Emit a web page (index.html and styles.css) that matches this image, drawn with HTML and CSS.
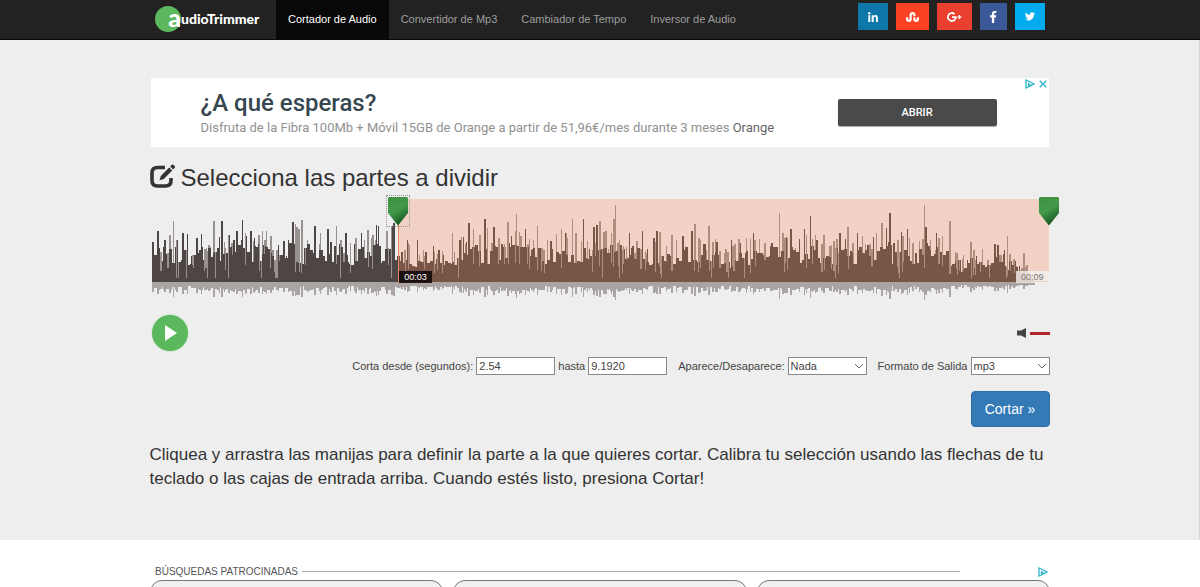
FILE: index.html
```html
<!DOCTYPE html>
<html lang="es">
<head>
<meta charset="utf-8">
<meta name="viewport" content="width=device-width, initial-scale=1">
<title>AudioTrimmer</title>
<link rel="stylesheet" href="styles.css">
</head>
<body>
<header class="topbar">
  <div class="container topbar-inner">
    <a class="logo" href="#"><span class="logo-a">a</span><span class="logo-rest">udioTrimmer</span></a>
    <nav class="nav">
      <a class="nav-link active" href="#">Cortador de Audio</a>
      <a class="nav-link" href="#">Convertidor de Mp3</a>
      <a class="nav-link" href="#">Cambiador de Tempo</a>
      <a class="nav-link" href="#">Inversor de Audio</a>
    </nav>
    <div class="social">
      <a class="share linkedin" href="#" aria-label="LinkedIn"><svg width="10" height="10" viewBox="0 0 10 10"><circle cx="1.3" cy="1.2" r="1.2"/><path d="M.3 3.2h2V10h-2zM3.7 3.2h1.9v.9c.4-.7 1.1-1.1 2-1.1 1.7 0 2.3 1 2.3 2.9V10h-2V6.400c0-1-.2-1.700-1-1.700s-1.200.6-1.200 1.700V10h-2z"/></svg></a>
      <a class="share stumble" href="#" aria-label="StumbleUpon"><svg width="13" height="10" viewBox="0 0 13 10"><path d="M7.300 4V3A.8.8 0 0 0 5.700 3v4A2.850 2.850 0 0 1 0 7V5.200h2.200V7a.7.7 0 0 0 1.400 0V2.900a2.900 2.900 0 0 1 5.800 0V4l-1.200.5zM7.300 5.200l.9.400 1.200-.4V7a.7.7 0 0 0 1.400 0V5.200H13V7a2.850 2.850 0 0 1-5.700 0z"/></svg></a>
      <a class="share google" href="#" aria-label="Google+"><svg width="15" height="10" viewBox="0 0 15 10"><path d="M5 4.200h4.700C10 7.400 8 9.900 5 9.900A4.900 4.900 0 1 1 8.300 1.400L6.900 2.800A3 3 0 1 0 5 7.900c1.500 0 2.400-.9 2.600-2H5zM11.700 3.100h1.400v1.300h1.400v1.400h-1.400v1.300h-1.400V5.800h-1.300V4.400h1.300z"/></svg></a>
      <a class="share facebook" href="#" aria-label="Facebook"><svg width="7" height="12" viewBox="0 0 7 12"><path d="M6.300.1v1.900H5.200c-.8 0-1 .4-1 1v1.300h2.100L6 6.400H4.200V12H1.900V6.400H.1V4.300h1.800V2.700C1.900.9 3 0 4.600 0z"/></svg></a>
      <a class="share twitter" href="#" aria-label="Twitter"><svg width="10" height="9" viewBox="0 0 24 20"><path d="M24 2.400a10 10 0 0 1-2.800.8A5 5 0 0 0 23.300.4a10 10 0 0 1-3.100 1.200 4.900 4.900 0 0 0-8.400 4.500A14 14 0 0 1 1.700.9 4.900 4.900 0 0 0 3.200 7.500 5 5 0 0 1 1 6.900a4.900 4.900 0 0 0 3.900 4.900 5 5 0 0 1-2.200.1 4.900 4.900 0 0 0 4.600 3.400A10 10 0 0 1 0 17.400a14 14 0 0 0 21.500-12.400A10 10 0 0 0 24 2.400z"/></svg></a>
    </div>
  </div>
</header>

<main class="main">
  <div class="container">
    <section class="banner">
      <div class="banner-text">
        <h2 class="banner-title">¿A qué esperas?</h2>
        <p class="banner-copy">Disfruta de la Fibra 100Mb + Móvil 15GB de Orange a partir de 51,96€/mes durante 3 meses <span class="brand">Orange</span></p>
      </div>
      <button class="banner-button" type="button">ABRIR</button>
      <div class="ad-marks">
        <svg class="ad-icon" width="10" height="10" viewBox="0 0 10 10"><path d="M1 1v8l8-4zM3.500 4v3l2-1.800"/></svg>
        <svg class="ad-icon" width="8" height="8" viewBox="0 0 8 8"><path d="M.7.7l6.600 6.600M7.300.7L.7 7.300"/></svg>
      </div>
    </section>

    <h1 class="heading">
      <svg class="edit-icon" width="26" height="24" viewBox="0 0 26 24"><path class="edit-frame" d="M15 3.500H7.500Q2 3.500 2 9v7.500Q2 22 7.500 22h8Q21 22 21 16.500V14"/><path d="M9.500 16.300l1.300-4.400 8.400-8.400 3 3-8.400 8.400zM20.200 2.500l1.600-1.700q.8-.8 1.600 0l1.300 1.300q.8.800 0 1.600l-1.600 1.700z"/></svg>
      Selecciona las partes a dividir
    </h1>

    <section class="wave">
      <svg class="wave-svg" viewBox="0 0 898 104" preserveAspectRatio="none" shape-rendering="crispEdges" aria-hidden="true">
        <path id="wave-reflection" class="wave-reflection"/>
        <path id="wave-light" class="wave-light"/>
        <path id="wave-dark" class="wave-dark"/>
      </svg>
      <div class="selection">
        <span class="time time-start">00:03</span>
        <span class="time time-end">00:09</span>
        <button class="handle handle-start" type="button" aria-label="Inicio"><svg width="22" height="30" viewBox="0 0 22 30"><defs><linearGradient id="green" x1=".3" y1="0" x2=".7" y2="1"><stop offset="0" stop-color="#3f9443"/><stop offset=".45" stop-color="#43994a"/><stop offset="1" stop-color="#0e4d1b"/></linearGradient></defs><path fill="url(#green)" d="M2 1h18l1 1v15L11 29.500 1 17V2z"/></svg></button>
        <button class="handle handle-end" type="button" aria-label="Fin"><svg width="22" height="30" viewBox="0 0 22 30"><path fill="url(#green)" d="M2 1h18l1 1v15L11 29.500 1 17V2z"/></svg></button>
      </div>
    </section>

    <section class="player">
      <button class="play" type="button" aria-label="Reproducir"><svg width="12" height="16" viewBox="0 0 12 16"><path d="M0 0l12 8-12 8z"/></svg></button>
      <div class="volume">
        <svg width="9" height="10" viewBox="0 0 9 10"><path d="M0 2.500h4L9 0v10L4 7.500H0z"/></svg>
        <span class="volume-level"></span>
      </div>
    </section>

    <form class="form">
      <div class="fields">
        <label for="from">Corta desde (segundos):</label>
        <input class="field" id="from" type="text" value="2.54">
        <label for="to">hasta</label>
        <input class="field" id="to" type="text" value="9.1920">
        <label class="spaced" for="fade">Aparece/Desaparece:</label>
        <select class="field select" id="fade"><option>Nada</option></select>
        <label class="spaced" for="format">Formato de Salida</label>
        <select class="field select" id="format"><option>mp3</option></select>
      </div>
      <button class="cut" type="button">Cortar »</button>
    </form>

    <p class="help">Cliquea y arrastra las manijas para definir la parte a la que quieres cortar. Calibra tu selección usando las flechas de tu teclado o las cajas de entrada arriba. Cuando estés listo, presiona Cortar!</p>
  </div>
</main>

<section class="container sponsored">
  <div class="sponsored-head">
    <span>BÚSQUEDAS PATROCINADAS</span>
    <span class="rule"></span>
    <svg class="ad-icon" width="10" height="10" viewBox="0 0 10 10"><path d="M1 1v8l8-4zM3.500 4v3l2-1.800"/></svg>
  </div>
  <div class="cards">
    <div class="card"></div>
    <div class="card"></div>
    <div class="card"></div>
  </div>
</section>
<script src="wave.js"></script>
</body>
</html>
```
FILE: styles.css
```css
* { box-sizing: border-box; }
html { scrollbar-width: none; }
body {
  margin: 0;
  background: #fff;
  color: #333;
  font-family: "Liberation Sans", Arial, sans-serif;
  font-size: 11px;
}
h1, h2, p { margin: 0; font-weight: 400; }
a { text-decoration: none; }
button { font-family: inherit; padding: 0; border: 0; cursor: pointer; }
svg { display: block; flex: none; }

.container { max-width: 900px; margin: 0 auto; }

.topbar { background: #222; border-bottom: 1px solid #080808; }
.topbar-inner { display: flex; height: 39px; padding: 0 5px; }
.logo {
  display: flex;
  align-items: center;
  width: 121px;
  padding-bottom: 2px;
  color: #fff;
  font-family: Lato, sans-serif;
  font-weight: 900;
  font-size: 14px;
}
.logo-a {
  display: flex;
  align-items: center;
  justify-content: flex-end;
  width: 26px;
  height: 26px;
  padding-bottom: 3px;
  border-radius: 50%;
  background: #5cb85c;
  font-size: 25px;
  line-height: 24px;
}
.nav { display: flex; flex: 1; }
.nav-link {
  display: flex;
  align-items: center;
  padding: 0 12px 2px;
  color: #9d9d9d;
  white-space: nowrap;
}
.nav-link.active { background: #080808; color: #fff; }
.social { display: flex; gap: 8px; padding-top: 3px; }
.share {
  display: flex;
  align-items: center;
  height: 27px;
  padding: 0 10px;
  fill: #fff;
}
.linkedin { background: #0e76a8; }
.stumble { background: #fb4323; }
.google { background: #e93f2e; }
.facebook { background: #3b5998; }
.twitter { background: #00acee; }

.main {
  padding: 38px 0 49px;
  background: #eee;
  border-right: 1px solid #d8d8d8;
}

.banner {
  position: relative;
  display: flex;
  align-items: center;
  justify-content: space-between;
  margin: 0 1px;
  padding: 10px 52px 10px 50px;
  background: #fff;
  font-family: Roboto, sans-serif;
}
.banner-title {
  color: #37474f;
  font-size: 24px;
  font-weight: 500;
  line-height: 30px;
}
.banner-copy { color: #919191; font-size: 13px; line-height: 19px; }
.brand { color: #666; }
.banner-button {
  width: 159px;
  height: 27px;
  border-radius: 2px;
  background: #4a4a4a;
  box-shadow: 0 1px 1px #aaa;
  color: #fff;
  font-size: 11px;
  font-weight: 500;
}
.ad-marks {
  position: absolute;
  top: 1px;
  right: 2px;
  display: flex;
  align-items: center;
  gap: 4px;
}
.ad-icon { fill: none; stroke: #2fb4cc; stroke-width: 1.3; }

.heading {
  display: flex;
  align-items: center;
  gap: 5px;
  padding: 16px 0 6px;
  font-size: 24px;
  line-height: 30px;
}
.edit-icon { fill: #333; margin-top: -5px; }
.edit-frame { fill: none; stroke: #333; stroke-width: 3.6; }

.wave { position: relative; height: 104px; margin: 0 1px; }
.wave-svg { width: 100%; height: 100%; }
.wave-dark { fill: #4d4645; }
.wave-light { fill: #989190; }
.wave-reflection { fill: #aaa4a4; }
.selection {
  position: absolute;
  top: 0;
  right: 0;
  bottom: 21px;
  left: 27.6%;
  border-left: 1px solid #e8875e;
  background: rgba(253, 128, 77, .255);
}
.time {
  position: absolute;
  bottom: -1px;
  padding: 0 5px;
  font-size: 9px;
  line-height: 12px;
}
.time-start { left: 0; background: rgba(10, 5, 5, .85); color: #fff; }
.time-end { right: 0; background: rgba(245, 240, 235, .8); color: #777; }
.handle { position: absolute; top: -3px; width: 22px; height: 30px; background: none; }
.handle-start { left: -12px; outline: 1px dotted #999; }
.handle-end { right: -11px; }

.player {
  display: flex;
  align-items: center;
  justify-content: space-between;
  padding: 12px 0 0 2px;
}
.play {
  display: grid;
  place-items: center;
  width: 36px;
  height: 36px;
  padding-left: 2px;
  border-radius: 50%;
  background: #5cb85c;
  box-shadow: 0 0 2px #a8d8a8;
  fill: #fff;
}
.volume { display: flex; align-items: center; gap: 4px; fill: #444; }
.volume-level { width: 20px; height: 3px; background: #b3242b; }

.form { display: flex; flex-direction: column; align-items: flex-end; gap: 16px; padding-top: 6px; }
.fields { display: flex; align-items: center; gap: 3px; color: #444; }
.spaced { margin-left: 8px; }
.field {
  width: 79px;
  height: 18px;
  padding: 0 2px;
  border: 1px solid #888;
  border-radius: 0;
  background: #fff;
  color: #444;
  font-family: inherit;
  font-size: 11px;
}
.select {
  appearance: none;
  background: #fff url("data:image/svg+xml,%3Csvg xmlns='http://www.w3.org/2000/svg' width='10' height='6'%3E%3Cpath d='M1 1l4 4 4-4' fill='none' stroke='%23666'/%3E%3C/svg%3E") no-repeat right 2px center;
}
.cut {
  width: 79px;
  height: 36px;
  border: 1px solid #2e6da4;
  border-radius: 4px;
  background: #337ab7;
  color: #fff;
  font-size: 14px;
}
.help { padding-top: 16px; font-size: 17px; line-height: 24px; }

.sponsored { padding-top: 25px; }
.sponsored-head {
  display: flex;
  align-items: center;
  gap: 4px;
  padding: 0 2px 2px 5px;
  color: #555;
  font-size: 10px;
  line-height: 13px;
}
.rule { flex: 1; height: 1px; margin-right: 74px; background: #aaa; }
.cards { display: grid; grid-template-columns: repeat(3, 1fr); gap: 10px; }
.card { min-height: 48px; border: 1px solid #777; border-radius: 12px; background: #f0f0f0; }
```
FILE: wave.js
```js
// Amplitude peaks of the track: x offset, height.
const peaks = [
  1,40, 6,51, 13,42, 18,47, 22,61, 25,42, 31,49, 36,48, 41,27, 45,44, 50,48, 56,27, 62,61, 70,61, 74,34, 77,47,
  85,51, 91,62, 95,46, 99,51, 103,44, 107,47, 111,51, 115,51, 119,46, 121,32, 127,37, 132,41, 137,42, 141,60,
  150,62, 156,42, 163,56, 169,49, 176,53, 185,56, 189,42, 194,49, 199,39, 204,44, 210,49, 216,52, 221,47, 225,57,
  227,56, 235,51, 240,56, 242,59, 250,30, 256,42, 266,42, 274,30, 282,36, 287,32, 301,49, 308,42, 317,59, 322,53,
  328,47, 333,63, 342,55, 347,44, 356,60, 360,46, 365,68, 369,46, 374,53, 382,42, 386,56, 390,34, 396,42, 399,41,
  405,48, 410,53, 415,49, 421,63, 424,49, 432,63, 436,41, 442,55, 445,57, 448,61, 454,51, 460,49, 462,63, 464,77,
  471,32, 478,49, 485,41, 491,51, 495,29, 502,44, 505,51, 508,50, 515,36, 520,47, 525,42, 531,46, 540,51, 543,58,
  549,42, 557,56, 565,40, 574,33, 580,42, 587,43, 595,44, 602,49, 613,39, 619,34, 628,69, 633,44, 639,53, 648,43,
  653,53, 659,66, 665,42, 672,47, 678,36, 682,41, 688,49, 696,55, 701,39, 706,49, 711,46, 716,37, 722,45, 730,59,
  735,54, 738,69, 742,39, 750,50, 756,53, 761,39, 768,41, 773,77, 779,42, 785,49, 791,46, 798,61, 805,29, 812,27,
  819,40, 825,26, 831,33, 836,22, 843,38, 846,37, 853,32, 856,46, 865,16, 872,29, 875,17, 882,3
];
// Quiet points between words.
const dips = [25, 27, 35, 56, 64, 77, 110, 124, 125, 126, 189, 240, 307, 451, 468, 510, 560, 577, 593, 684, 748, 820, 838, 855];

let seed = 7;
function rand() {
  seed = (seed * 1103515245 + 12345) % 2147483648;
  return seed / 2147483648;
}

const base = 83;
let dark = "", light = "", reflection = "";
function bar(x, top, height) { return `M${x} ${top}h1v${height}h-1z`; }

let p = 0;
let level = 0.5;
let hold = 0, heldSpike = 0, heldDark = false;
for (let x = 1; x < 884; x++) {
  while (p + 2 < peaks.length && peaks[p + 2] <= x) p += 2;
  const next = Math.min(p + 2, peaks.length - 2);
  const local = (peaks[p + 1] + peaks[next + 1]) / 2;
  // Runs of two or three columns share a level, as in a downsampled track.
  if (x % 3 === 0) level = 0.36 + rand() * 0.42;
  let body = Math.round(Math.min(local, 50) * level);
  let spike = body;
  if (peaks[p] === x) {
    hold = 1 + Math.round(rand());
    heldSpike = peaks[p + 1];
    heldDark = x < 245 ? rand() < 0.6 : rand() < 0.5;
  } else if (hold === 0 && rand() < 0.28) {
    hold = 1 + Math.round(rand());
    heldSpike = Math.round(local * (0.62 + rand() * 0.36));
    heldDark = rand() < 0.35;
  }
  if (hold > 0) {
    hold--;
    spike = Math.max(heldSpike, body);
    if (heldDark) body = spike;
    else if (rand() < 0.35) body = Math.round(body * 0.5);
  }
  if (dips.includes(x)) body = 4;
  if (x > 868) body = Math.min(body, Math.round((884 - x) / 2));
  if (x > 876) spike = body;
  light += bar(x, base - spike, spike);
  dark += bar(x, base - body, body);
  reflection += bar(x, base, Math.max(3, Math.round(spike * 0.24)));
}
dark += "M877 82h20v1h-20z";
document.getElementById("wave-dark").setAttribute("d", dark);
document.getElementById("wave-light").setAttribute("d", light);
document.getElementById("wave-reflection").setAttribute("d", reflection);
```
